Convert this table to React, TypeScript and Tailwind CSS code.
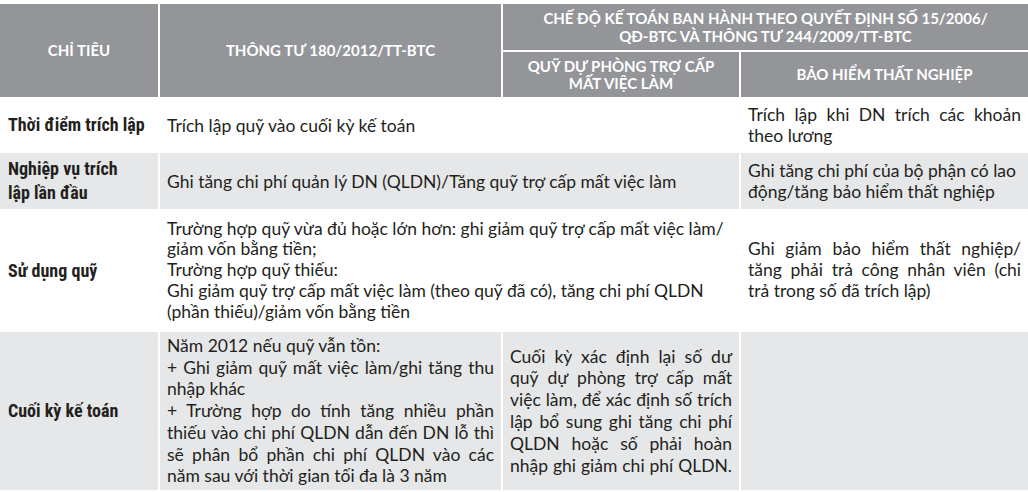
const body = "font-['Lato','Noto_Sans',sans-serif] text-[17.5px] text-[#231f20]"
const label =
  "font-['Roboto_Condensed','DejaVu_Sans_Condensed','Roboto',sans-serif] font-bold text-[18px] leading-[24px] text-[#231f20] px-[8px] flex items-center"
const head =
  "bg-[#939598] text-white font-['Lato','Noto_Sans',sans-serif] font-bold text-[15px] flex items-center justify-center text-center"

// one line per block so the breaks land where the reference puts them;
// `j` lines are stretched to the full width
function Lines({ lines, className = '' }: { lines: { t: string; j?: boolean }[]; className?: string }) {
  return (
    <div className={className}>
      {lines.map((l, i) => (
        <div
          key={i}
          className={
            l.j
              ? 'whitespace-nowrap text-justify [text-align-last:justify]'
              : 'whitespace-nowrap text-left'
          }
        >
          {l.t}
        </div>
      ))}
    </div>
  )
}

export default function App() {
  return (
    <div className="w-[1028px] h-[492px] bg-white pt-[4px] overflow-hidden">
      <div className="grid grid-cols-[158px_341px_236px_287px] grid-rows-[46px_45px_52px_56px_119px_158px] gap-[2px]">
        {/* header */}
        <div className={`${head} row-span-2 uppercase`}>Chỉ tiêu</div>
        <div className={`${head} row-span-2`}>THÔNG TƯ 180/2012/TT-BTC</div>
        <div className={`${head} col-span-2 leading-[18px]`}>
          CHẾ ĐỘ KẾ TOÁN BAN HÀNH THEO QUYẾT ĐỊNH SỐ 15/2006/
          <br />
          QĐ-BTC VÀ THÔNG TƯ 244/2009/TT-BTC
        </div>
        <div className={`${head} leading-[17px]`}>
          QUỸ DỰ PHÒNG TRỢ CẤP
          <br />
          MẤT VIỆC LÀM
        </div>
        <div className={head}>BẢO HIỂM THẤT NGHIỆP</div>

        {/* thời điểm trích lập */}
        <div className={label}>Thời điểm trích lập</div>
        <div className={`${body} col-span-2 flex items-center pl-[7px] leading-[21px]`}>
          Trích lập quỹ vào cuối kỳ kế toán
        </div>
        <div className={`${body} flex items-center px-[7px] leading-[21px]`}>
          <Lines
            className="w-full"
            lines={[{ t: 'Trích lập khi DN trích các khoản', j: true }, { t: 'theo lương' }]}
          />
        </div>

        {/* nghiệp vụ trích lập lần đầu */}
        <div className={`${label} bg-[#e6e7e8]`}>
          Nghiệp vụ trích
          <br />
          lập lần đầu
        </div>
        <div className={`${body} bg-[#e6e7e8] col-span-2 flex items-center pl-[7px] leading-[21px]`}>
          Ghi tăng chi phí quản lý DN (QLDN)/Tăng quỹ trợ cấp mất việc làm
        </div>
        <div className={`${body} bg-[#e6e7e8] flex items-center px-[7px] leading-[21px]`}>
          <Lines
            className="w-full"
            lines={[{ t: 'Ghi tăng chi phí của bộ phận có lao' }, { t: 'động/tăng bảo hiểm thất nghiệp' }]}
          />
        </div>

        {/* sử dụng quỹ */}
        <div className={label}>Sử dụng quỹ</div>
        <div className={`${body} col-span-2 flex items-center pl-[7px] leading-[20.8px]`}>
          <Lines
            lines={[
              { t: 'Trường hợp quỹ vừa đủ hoặc lớn hơn: ghi giảm quỹ trợ cấp mất việc làm/' },
              { t: 'giảm vốn bằng tiền;' },
              { t: 'Trường hợp quỹ thiếu:' },
              { t: 'Ghi giảm quỹ trợ cấp mất việc làm (theo quỹ đã có), tăng chi phí QLDN' },
              { t: '(phần thiếu)/giảm vốn bằng tiền' },
            ]}
          />
        </div>
        <div className={`${body} flex items-center px-[7px] leading-[20.8px]`}>
          <Lines
            className="w-full"
            lines={[
              { t: 'Ghi giảm bảo hiểm thất nghiệp/', j: true },
              { t: 'tăng phải trả công nhân viên (chi', j: true },
              { t: 'trả trong số đã trích lập)' },
            ]}
          />
        </div>

        {/* cuối kỳ kế toán */}
        <div className={`${label} bg-[#e6e7e8]`}>Cuối kỳ kế toán</div>
        <div className={`${body} bg-[#e6e7e8] flex items-center px-[7px] leading-[21.8px]`}>
          <Lines
            className="w-full"
            lines={[
              { t: 'Năm 2012 nếu quỹ vẫn tồn:' },
              { t: '+ Ghi giảm quỹ mất việc làm/ghi tăng thu', j: true },
              { t: 'nhập khác' },
              { t: '+ Trường hợp do tính tăng nhiều phần', j: true },
              { t: 'thiếu vào chi phí QLDN dẫn đến DN lỗ thì', j: true },
              { t: 'sẽ phân bổ phần chi phí QLDN vào các', j: true },
              { t: 'năm sau với thời gian tối đa là 3 năm' },
            ]}
          />
        </div>
        <div className={`${body} bg-[#e6e7e8] flex items-center px-[7px] leading-[21.8px]`}>
          <Lines
            className="w-full"
            lines={[
              { t: 'Cuối kỳ xác định lại số dư', j: true },
              { t: 'quỹ dự phòng trợ cấp mất', j: true },
              { t: 'việc làm, để xác định số trích', j: true },
              { t: 'lập bổ sung ghi tăng chi phí', j: true },
              { t: 'QLDN hoặc số phải hoàn', j: true },
              { t: 'nhập ghi giảm chi phí QLDN.', j: true },
            ]}
          />
        </div>
        <div className="bg-[#e6e7e8]" />
      </div>
    </div>
  )
}
